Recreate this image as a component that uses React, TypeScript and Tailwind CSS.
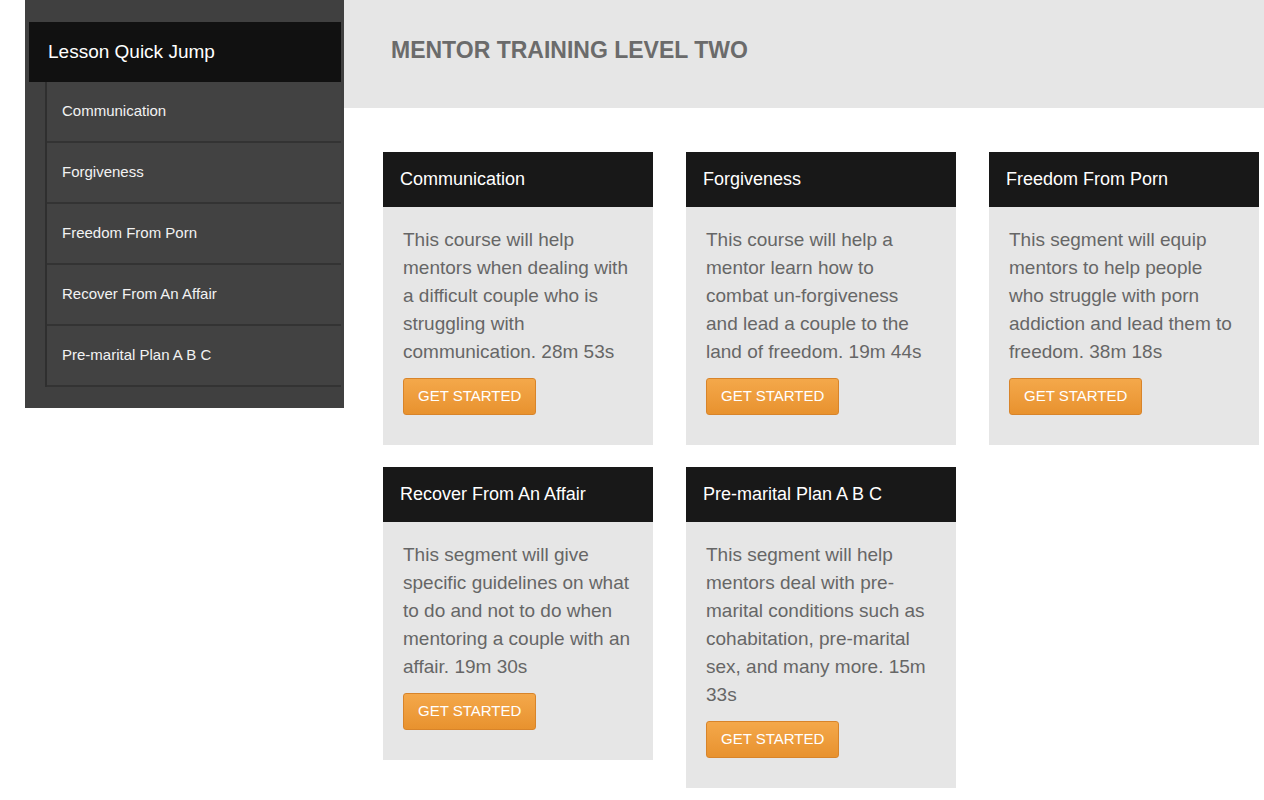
const lessons = [
  {
    title: "Communication",
    body: "This course will help mentors when dealing with a difficult couple who is struggling with communication. 28m 53s",
  },
  {
    title: "Forgiveness",
    body: "This course will help a mentor learn how to combat un-forgiveness and lead a couple to the land of freedom. 19m 44s",
  },
  {
    title: "Freedom From Porn",
    body: "This segment will equip mentors to help people who struggle with porn addiction and lead them to freedom. 38m 18s",
  },
  {
    title: "Recover From An Affair",
    body: "This segment will give specific guidelines on what to do and not to do when mentoring a couple with an affair. 19m 30s",
  },
  {
    title: "Pre-marital Plan A B C",
    body: "This segment will help mentors deal with pre-marital conditions such as cohabitation, pre-marital sex, and many more. 15m 33s",
  },
];

const Sidebar = () => (
  <aside className="w-[344px] shrink-0">
    <div className="ml-[25px] w-[319px] bg-[#404040] pt-[22px] pb-[21px] pl-[4px] pr-[3px]">
      <div className="bg-[#111111] h-[60px] flex items-center pl-[19px] text-[19px] text-white">
        Lesson Quick Jump
      </div>
      <ul className="ml-[16px] border-l-2 border-[#2f2f2f]">
        {lessons.map((l) => (
          <li
            key={l.title}
            className="h-[61px] flex items-center pl-[15px] text-[15px] text-[#f2f2f2] border-b-2 border-[#333333] bg-[#424242]"
          >
            {l.title}
          </li>
        ))}
      </ul>
    </div>
  </aside>
);

const LessonCard = ({ title, body }: { title: string; body: string }) => (
  <div className="bg-[#e6e6e6]">
    <div className="bg-[#181818] h-[55px] flex items-center px-[17px] text-[18px] text-white">
      {title}
    </div>
    <div className="pt-[19px] pb-[30px] pl-[20px] pr-[22px]">
      <p className="text-[19px] leading-[28px] text-[#666666]">{body}</p>
      <button className="mt-[12px] h-[37px] px-[14px] rounded-[3px] border border-[#d8842a] bg-gradient-to-b from-[#f4a84a] to-[#e8922e] text-white text-[15px] uppercase">
        Get Started
      </button>
    </div>
  </div>
);

export default function App() {
  return (
    <div className="min-h-[800px] bg-white flex font-['Liberation_Sans',Arial,sans-serif]">
      <Sidebar />
      <main className="flex-1">
        <header className="h-[108px] bg-[#e6e6e6] flex items-center pl-[47px] pb-[8px]">
          <h1 className="text-[23px] font-bold text-[#6b6b6b] uppercase">Mentor Training Level Two</h1>
        </header>
        <section className="pt-[44px] pl-[39px] pr-[5px] grid grid-cols-3 gap-x-[33px] gap-y-[22px] items-start">
          {lessons.map((l) => (
            <LessonCard key={l.title} title={l.title} body={l.body} />
          ))}
        </section>
      </main>
    </div>
  );
}
